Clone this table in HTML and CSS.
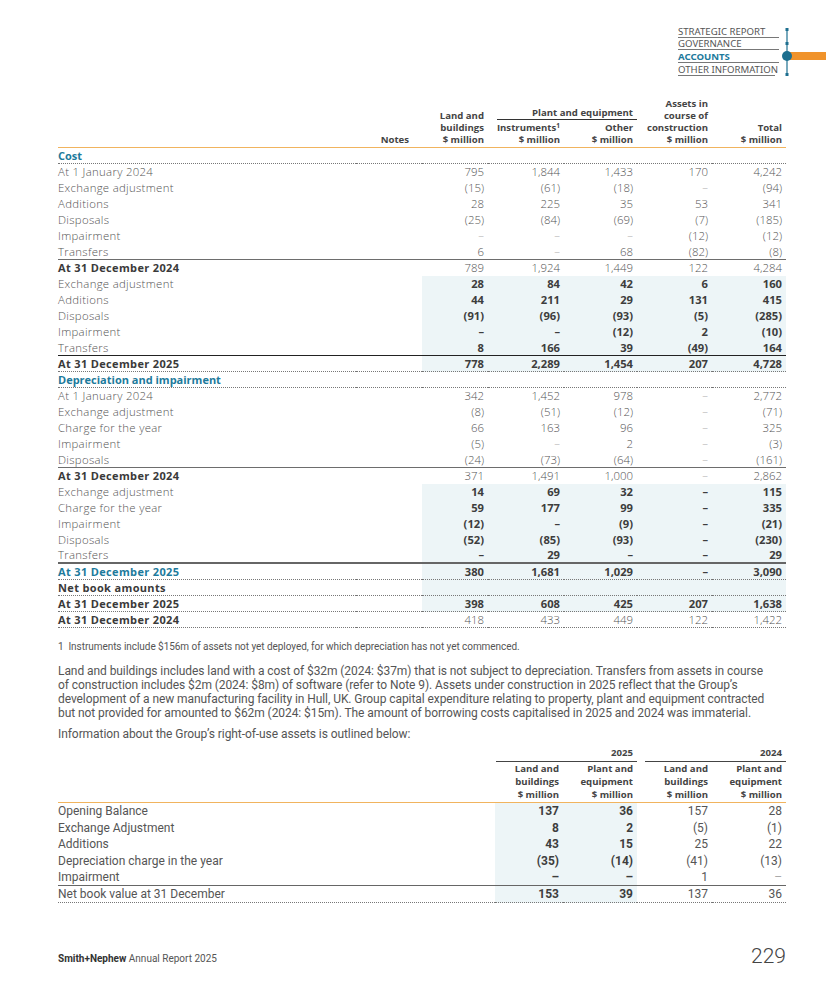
FILE: index.html
```html
<!DOCTYPE html>
<html lang="en">
<head>
<meta charset="utf-8">
<title>Smith+Nephew Annual Report 2025 – Property, plant and equipment</title>
<link rel="stylesheet" href="styles.css">
</head>
<body>
<div class="page">
  <header class="topnav">
    <ul class="navlist">
      <li>Strategic Report</li>
      <li>Governance</li>
      <li class="active">Accounts</li>
      <li>Other Information</li>
    </ul>
    <svg class="navmark" width="47" height="56" viewBox="0 0 47 56">
      <rect x="8" y="28" width="39" height="8" fill="#f0932b"/>
      <line x1="8" y1="4" x2="8" y2="52" stroke="#1d6f8f" stroke-width="1.2"/>
      <rect x="6.5" y="4" width="3" height="3" fill="#1d6f8f"/>
      <rect x="6.5" y="18" width="3" height="3" fill="#1d6f8f"/>
      <rect x="6.5" y="49" width="3" height="3" fill="#1d6f8f"/>
      <circle cx="8" cy="32" r="5" fill="#1d6f8f"/>
    </svg>
  </header>

  <table class="ppe">
    <colgroup>
      <col class="c-label"><col class="c-notes"><col class="c-land"><col class="c-inst"><col class="c-other"><col class="c-assets"><col class="c-total">
    </colgroup>
    <thead>
      <tr class="h1">
        <th rowspan="2" class="hl-label"></th>
        <th rowspan="2" class="notes">Notes</th>
        <th rowspan="2">Land and<br>buildings<br>$ million</th>
        <th colspan="2" class="group"><div class="groupline">Plant and equipment</div></th>
        <th rowspan="2">Assets in<br>course of<br>construction<br>$ million</th>
        <th rowspan="2">Total<br>$ million</th>
      </tr>
      <tr class="h2">
        <th>Instruments<sup>1</sup><br>$ million</th>
        <th>Other<br>$ million</th>
      </tr>
    </thead>
    <tbody>
      <tr class="sec dot"><td>Cost</td><td></td><td></td><td></td><td></td><td></td><td></td></tr>
      <tr><td>At 1 January 2024</td><td></td><td>795</td><td>1,844</td><td>1,433</td><td>170</td><td>4,242</td></tr>
      <tr><td>Exchange adjustment</td><td></td><td>(15)</td><td>(61)</td><td>(18)</td><td class="dash">–</td><td>(94)</td></tr>
      <tr><td>Additions</td><td></td><td>28</td><td>225</td><td>35</td><td>53</td><td>341</td></tr>
      <tr><td>Disposals</td><td></td><td>(25)</td><td>(84)</td><td>(69)</td><td>(7)</td><td>(185)</td></tr>
      <tr><td>Impairment</td><td></td><td class="dash">–</td><td class="dash">–</td><td class="dash">–</td><td>(12)</td><td>(12)</td></tr>
      <tr class="solid"><td>Transfers</td><td></td><td>6</td><td class="dash">–</td><td>68</td><td>(82)</td><td>(8)</td></tr>
      <tr class="tot"><td>At 31 December 2024</td><td></td><td>789</td><td>1,924</td><td>1,449</td><td>122</td><td>4,284</td></tr>
      <tr class="cur"><td>Exchange adjustment</td><td></td><td>28</td><td>84</td><td>42</td><td>6</td><td>160</td></tr>
      <tr class="cur"><td>Additions</td><td></td><td>44</td><td>211</td><td>29</td><td>131</td><td>415</td></tr>
      <tr class="cur"><td>Disposals</td><td></td><td>(91)</td><td>(96)</td><td>(93)</td><td>(5)</td><td>(285)</td></tr>
      <tr class="cur"><td>Impairment</td><td></td><td>–</td><td>–</td><td>(12)</td><td>2</td><td>(10)</td></tr>
      <tr class="cur solid dark"><td>Transfers</td><td></td><td>8</td><td>166</td><td>39</td><td>(49)</td><td>164</td></tr>
      <tr class="cur tot dot"><td>At 31 December 2025</td><td></td><td>778</td><td>2,289</td><td>1,454</td><td>207</td><td>4,728</td></tr>
      <tr class="sec dot"><td>Depreciation and impairment</td><td></td><td></td><td></td><td></td><td></td><td></td></tr>
      <tr><td>At 1 January 2024</td><td></td><td>342</td><td>1,452</td><td>978</td><td class="dash">–</td><td>2,772</td></tr>
      <tr><td>Exchange adjustment</td><td></td><td>(8)</td><td>(51)</td><td>(12)</td><td class="dash">–</td><td>(71)</td></tr>
      <tr><td>Charge for the year</td><td></td><td>66</td><td>163</td><td>96</td><td class="dash">–</td><td>325</td></tr>
      <tr><td>Impairment</td><td></td><td>(5)</td><td class="dash">–</td><td>2</td><td class="dash">–</td><td>(3)</td></tr>
      <tr class="solid"><td>Disposals</td><td></td><td>(24)</td><td>(73)</td><td>(64)</td><td class="dash">–</td><td>(161)</td></tr>
      <tr class="tot"><td>At 31 December 2024</td><td></td><td>371</td><td>1,491</td><td>1,000</td><td class="dash">–</td><td>2,862</td></tr>
      <tr class="cur"><td>Exchange adjustment</td><td></td><td>14</td><td>69</td><td>32</td><td>–</td><td>115</td></tr>
      <tr class="cur"><td>Charge for the year</td><td></td><td>59</td><td>177</td><td>99</td><td>–</td><td>335</td></tr>
      <tr class="cur"><td>Impairment</td><td></td><td>(12)</td><td>–</td><td>(9)</td><td>–</td><td>(21)</td></tr>
      <tr class="cur"><td>Disposals</td><td></td><td>(52)</td><td>(85)</td><td>(93)</td><td>–</td><td>(230)</td></tr>
      <tr class="cur solid thick"><td>Transfers</td><td></td><td>–</td><td>29</td><td>–</td><td>–</td><td>29</td></tr>
      <tr class="cur tot teal dot"><td>At 31 December 2025</td><td></td><td>380</td><td>1,681</td><td>1,029</td><td>–</td><td>3,090</td></tr>
      <tr class="cur tot dot"><td>Net book amounts</td><td></td><td></td><td></td><td></td><td></td><td></td></tr>
      <tr class="cur tot dot"><td>At 31 December 2025</td><td></td><td>398</td><td>608</td><td>425</td><td>207</td><td>1,638</td></tr>
      <tr class="tot dot"><td>At 31 December 2024</td><td></td><td>418</td><td>433</td><td>449</td><td>122</td><td>1,422</td></tr>
    </tbody>
  </table>

  <p class="footnote">1&nbsp; Instruments include $156m of assets not yet deployed, for which depreciation has not yet commenced.</p>

  <p class="body">Land and buildings includes land with a cost of $32m (2024: $37m) that is not subject to depreciation. Transfers from assets in course<br>of construction includes $2m (2024: $8m) of software (refer to Note 9). Assets under construction in 2025 reflect that the Group’s<br>development of a new manufacturing facility in Hull, UK. Group capital expenditure relating to property, plant and equipment contracted<br>but not provided for amounted to $62m (2024: $15m). The amount of borrowing costs capitalised in 2025 and 2024 was immaterial.</p>

  <p class="body intro">Information about the Group’s right-of-use assets is outlined below:</p>

  <table class="rou">
    <colgroup>
      <col class="r-label"><col class="r-a"><col class="r-b"><col class="r-c"><col class="r-d">
    </colgroup>
    <thead>
      <tr class="y">
        <th></th>
        <th colspan="2"><div class="yline y25">2025</div></th>
        <th colspan="2"><div class="yline y24">2024</div></th>
      </tr>
      <tr class="h">
        <th></th>
        <th>Land and<br>buildings<br>$ million</th>
        <th>Plant and<br>equipment<br>$ million</th>
        <th>Land and<br>buildings<br>$ million</th>
        <th>Plant and<br>equipment<br>$ million</th>
      </tr>
    </thead>
    <tbody>
      <tr><td>Opening Balance</td><td class="hl b">137</td><td class="hl b">36</td><td>157</td><td>28</td></tr>
      <tr><td>Exchange Adjustment</td><td class="hl b">8</td><td class="hl b">2</td><td>(5)</td><td>(1)</td></tr>
      <tr><td>Additions</td><td class="hl b">43</td><td class="hl b">15</td><td>25</td><td>22</td></tr>
      <tr><td>Depreciation charge in the year</td><td class="hl b">(35)</td><td class="hl b">(14)</td><td>(41)</td><td>(13)</td></tr>
      <tr class="solid"><td>Impairment</td><td class="hl b">–</td><td class="hl b">–</td><td>1</td><td class="dash">–</td></tr>
      <tr class="dot"><td>Net book value at 31 December</td><td class="hl b">153</td><td class="hl b">39</td><td>137</td><td>36</td></tr>
    </tbody>
  </table>

  <footer class="foot">
    <span class="brand"><b>Smith+Nephew</b> Annual Report 2025</span>
    <span class="pageno">229</span>
  </footer>
</div>
</body>
</html>
```

FILE: styles.css
```css
* { box-sizing: border-box; }

body {
  margin: 0;
  background: #ffffff;
  color: #555555;
  font-family: "Open Sans", "Noto Sans", sans-serif;
}

.page {
  width: 826px;
  height: 983px;
  padding: 0 40px 0 58px;
  display: flex;
  flex-direction: column;
  overflow: hidden;
}

/* ---------- top navigation ---------- */
.topnav {
  display: flex;
  justify-content: flex-end;
  align-items: flex-start;
  margin-right: -40px;
  padding-top: 24px;
}

.navlist {
  list-style: none;
  margin: 0;
  padding: 0;
  width: 101px;
  font-family: "Noto Sans", sans-serif;
  font-size: 9.6px;
  text-transform: uppercase;
  color: #555;
}

.navlist li {
  line-height: 11px;
  padding-top: 1.7px;
  border-bottom: 1px solid #777;
  white-space: nowrap;
}

.navlist li + li { padding-top: 0.7px; }

.navlist li:last-child { width: 97px; }

.navlist .active {
  color: #1d7a9c;
  font-weight: 700;
}

.navmark { display: block; }

/* ---------- main PPE table ---------- */
.ppe {
  width: 728px;
  table-layout: fixed;
  border-collapse: separate;
  border-spacing: 0;
  margin-top: 17px;
}

.c-label { width: 298px; }
.c-notes { width: 66px; }
.c-land { width: 66px; }
.c-inst { width: 76px; }
.c-other { width: 73px; }
.c-assets { width: 75px; }
.c-total { width: 74px; }

.ppe th {
  font-size: 9.6px;
  font-weight: 700;
  color: #444;
  line-height: 12px;
  text-align: right;
  vertical-align: bottom;
  padding: 0 4px 1px 0;
  white-space: nowrap;
  border-bottom: 1.5px solid #f1b45e;
}

.ppe th.notes { padding-right: 13px; }

.ppe .h1 th.group {
  border-bottom: none;
  padding: 0 0 2px 9px;
}

.ppe .h1 { height: 25px; }

.groupline {
  border-bottom: 1px solid #333;
  padding-right: 4px;
  line-height: 12px;
}

.ppe sup {
  font-size: 6.5px;
  line-height: 0;
  vertical-align: 3px;
}

.ppe td {
  font-size: 11.4px;
  font-weight: 300;
  line-height: 16px;
  padding: 0 4px 0 0;
  text-align: right;
  white-space: nowrap;
  color: #555;
}

.ppe tbody tr:first-child td { line-height: 15px; }

.ppe td:first-child {
  text-align: left;
  color: #555;
  letter-spacing: 0.3px;
}

.ppe .dash { color: #aaa; }

.ppe .sec td:first-child {
  color: #1d7a9c;
  font-weight: 700;
  font-size: 11px;
  letter-spacing: 0;
}

.ppe .tot td:first-child {
  color: #3a3a3a;
  font-weight: 700;
  font-size: 11px;
  letter-spacing: 0.35px;
}

.ppe .teal td:first-child { color: #1d7a9c; }

.ppe .cur td:nth-child(n+3) {
  background: #edf5f7;
  font-weight: 700;
  font-size: 11.2px;
  color: #3d3d3d;
}

.ppe .dot td {
  border-bottom: 1px dotted #777;
  line-height: 15px;
}

.ppe .solid td {
  border-bottom: 1px solid #6d6d6d;
  line-height: 15px;
}

.ppe .solid.dark td { border-bottom-color: #222; }

.ppe .solid.thick td {
  border-bottom: 2px solid #666;
  line-height: 14px;
}

/* ---------- text ---------- */
.footnote {
  margin: 13px 0 0;
  font-family: "Roboto", sans-serif;
  font-size: 10px;
  line-height: 12px;
  color: #555;
  letter-spacing: -0.05px;
}

.body {
  margin: 11px 0 0;
  font-family: "Roboto", sans-serif;
  font-size: 12px;
  line-height: 14px;
  color: #555;
  letter-spacing: -0.07px;
  white-space: nowrap;
}

.body.intro { margin-top: 7px; }

/* ---------- right-of-use table ---------- */
.rou {
  width: 728px;
  table-layout: fixed;
  border-collapse: separate;
  border-spacing: 0;
  margin-top: 6px;
}

.r-label { width: 437px; }
.r-a { width: 68px; }
.r-b { width: 74px; }
.r-c { width: 75px; }
.r-d { width: 74px; }

.rou th {
  font-family: "Open Sans", sans-serif;
  font-size: 9.6px;
  font-weight: 700;
  color: #444;
  text-align: right;
  vertical-align: bottom;
  white-space: nowrap;
  padding: 0;
}

.rou .y th { line-height: 12px; padding-bottom: 0; }

.yline {
  border-bottom: 1px solid #444;
  padding: 0 4px 2px 0;
}

.y25 { margin-left: 1px; }
.y24 { margin-left: 8px; }

.rou .h th {
  line-height: 13px;
  padding: 0 4px 1px 0;
  border-bottom: 1.5px solid #f1b45e;
}

.rou td {
  font-family: "Roboto", sans-serif;
  font-size: 12px;
  letter-spacing: 0;
  line-height: 16.6px;
  padding: 0 4px 0 0;
  text-align: right;
  white-space: nowrap;
  color: #555;
}

.rou td:first-child { text-align: left; }

.rou td.hl { background: #edf5f7; }
.rou td.b { font-weight: 700; color: #3d3d3d; }
.rou .dash { color: #aaa; }

.rou .solid td {
  border-bottom: 1px solid #666;
  line-height: 16px;
}

.rou .dot td {
  border-bottom: 1px dotted #777;
  line-height: 16px;
}

/* ---------- footer ---------- */
.foot {
  margin-top: auto;
  margin-bottom: 17px;
  display: flex;
  justify-content: space-between;
  align-items: flex-end;
  width: 728px;
}

.brand {
  font-family: "Roboto", sans-serif;
  font-size: 10px;
  color: #555;
  padding-bottom: 2px;
}

.brand b { color: #333; font-weight: 700; }

.pageno {
  font-family: "Roboto", sans-serif;
  font-weight: 300;
  font-size: 21px;
  line-height: 20px;
  color: #444;
}
```
